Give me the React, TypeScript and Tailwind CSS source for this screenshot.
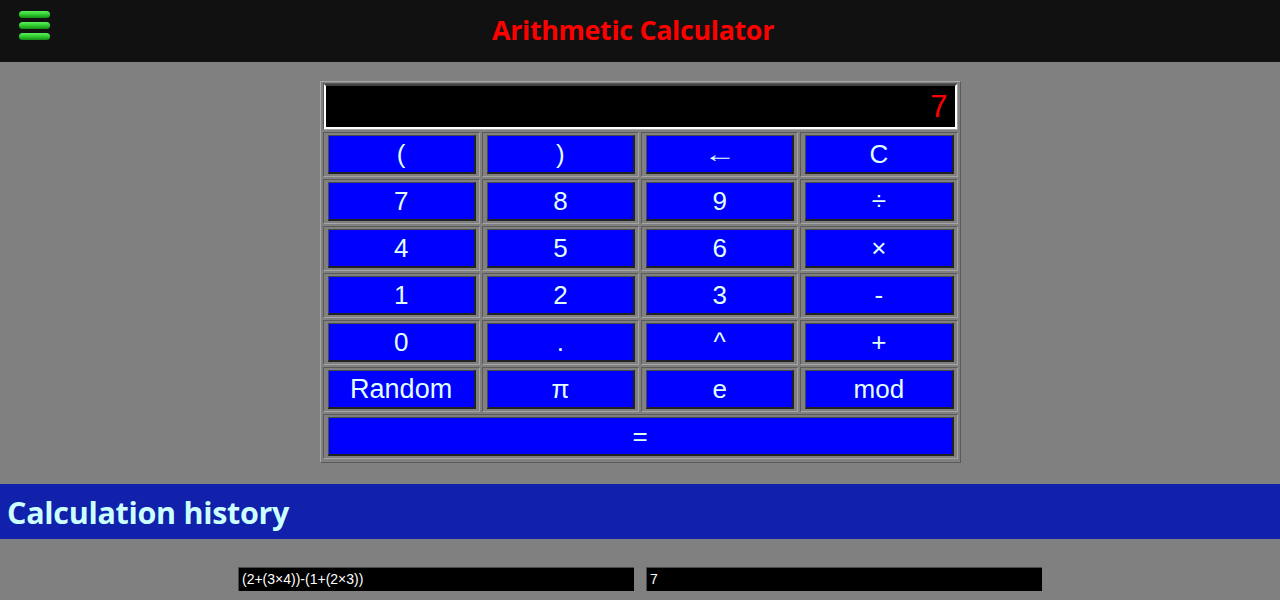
import React from "react";

const rows: string[][] = [
  ["(", ")", "←", "C"],
  ["7", "8", "9", "÷"],
  ["4", "5", "6", "×"],
  ["1", "2", "3", "-"],
  ["0", ".", "^", "+"],
  ["Random", "π", "e", "mod"],
];

function Key({ label }: { label: string }) {
  return (
    <div className="h-[45px] border border-t-[#5a5a5a] border-l-[#5a5a5a] border-b-[#a4a4a4] border-r-[#a4a4a4] pl-[4px] pr-[3px] py-[2px]">
      <button className="w-full h-[39px] bg-[#0000ff] text-[#e0ffff] text-[26px] leading-none border-t border-l border-t-[#4a4a4a] border-l-[#4a4a4a] border-b-2 border-r-2 border-b-[#222222] border-r-[#222222] flex items-center justify-center font-['Liberation_Sans',Arial,sans-serif]">
        {label === "←" ? (
          <span className="inline-block scale-x-[1.35] font-['Liberation_Sans',sans-serif] text-[24px]">←</span>
        ) : label === "Random" ? (
          <span className="text-[27px]">{label}</span>
        ) : (
          label
        )}
      </button>
    </div>
  );
}

export default function App() {
  return (
    <div className="min-h-[600px] bg-[#808080] font-['Liberation_Sans',Arial,sans-serif]">
      <header className="h-[62px] bg-[#111111] relative flex items-center justify-center">
        <div className="absolute left-[19px] top-[11px] flex flex-col gap-[4px]">
          {[0, 1, 2].map((i) => (
            <span
              key={i}
              className="block w-[31px] h-[7px] rounded-full bg-gradient-to-b from-[#5cf05c] via-[#2ecc2e] to-[#158a15]"
            />
          ))}
        </div>
        <h1 className="text-[#ff0000] font-bold text-[26.8px] font-['Open_Sans',sans-serif] tracking-[-0.3px] mt-[-2px] mr-[14px]">
          Arithmetic Calculator
        </h1>
      </header>

      <div className="mt-[19px] mx-auto w-[641px] border border-t-[#a8a8a8] border-l-[#a8a8a8] border-b-[#5a5a5a] border-r-[#5a5a5a] px-[2px] pt-[1px] pb-[3px] flex flex-col gap-[2px]">
        <div className="h-[47px] border border-t-[#5a5a5a] border-l-[#5a5a5a] border-b-[#a4a4a4] border-r-[#a4a4a4]">
          <div className="h-full bg-black border-t-2 border-t-[#404040] border-l-2 border-l-white border-r-2 border-r-white border-b-2 border-b-white flex items-center justify-end pr-[7px]">
            <span className="text-[#ff0000] text-[31px] leading-none">7</span>
          </div>
        </div>
        {rows.map((r, i) => (
          <div key={i} className="grid grid-cols-4 gap-[2px]">
            {r.map((k) => (
              <Key key={k} label={k} />
            ))}
          </div>
        ))}
        <Key label="=" />
      </div>

      <div className="mt-[21px] h-[55px] bg-[#1121ab] flex items-center pl-[7px]">
        <h2 className="text-[#ccffff] font-bold text-[30.5px] font-['Open_Sans',sans-serif] tracking-[-0.3px] mt-[3px]">
          Calculation history
        </h2>
      </div>

      <div className="mt-[28px] flex justify-center gap-[12px] pb-[10px]">
        <div className="w-[396px] h-[24px] bg-black border-t border-l border-t-[#4a4a4a] border-l-[#4a4a4a] text-white text-[14px] flex items-center pl-[3px]">
          (2+(3×4))-(1+(2×3))
        </div>
        <div className="w-[396px] h-[24px] bg-black border-t border-l border-t-[#4a4a4a] border-l-[#4a4a4a] text-white text-[14px] flex items-center pl-[3px]">
          7
        </div>
      </div>
    </div>
  );
}
